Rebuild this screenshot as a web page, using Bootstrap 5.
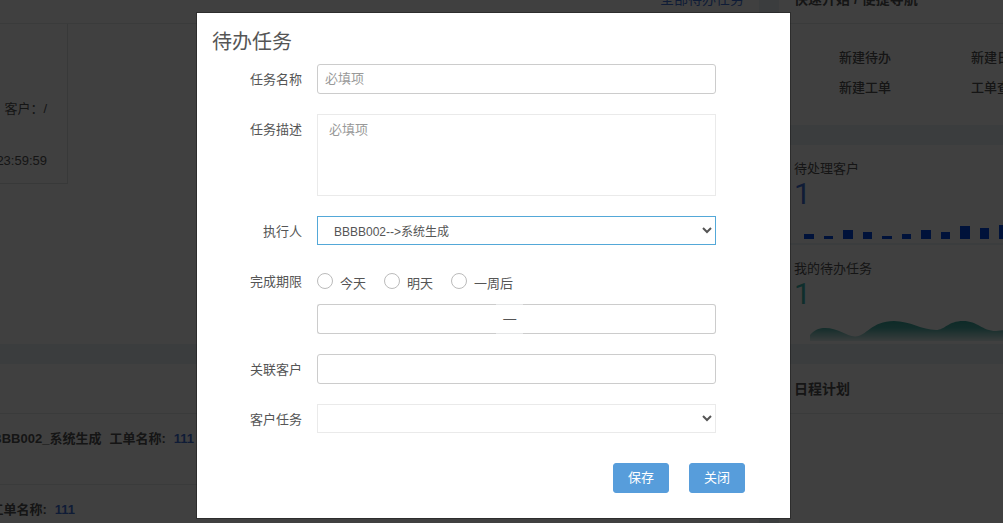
<!DOCTYPE html>
<html lang="zh-CN">
<head>
<meta charset="utf-8">
<meta name="viewport" content="width=device-width, initial-scale=1">
<title>待办任务</title>
<link href="https://cdn.jsdelivr.net/npm/bootstrap@5.3.0/dist/css/bootstrap.min.css" rel="stylesheet">
<style>
  body { font: 13px/20px "Liberation Sans", "Noto Sans CJK SC", sans-serif; color: #555; background: #ecf2f6; height: 100vh; overflow: hidden; }
  a { text-decoration: none; }

  /* dashboard behind the dialog */
  .dash { display: grid; grid-template-columns: minmax(0, 1fr) 224px; gap: 20px; height: 100vh; overflow: hidden; }
  .dash-col { display: flex; flex-direction: column; gap: 20px; }
  .panel { background: #fff; overflow: hidden; flex: none; }
  .panel.fill { flex: 1 0 auto; }
  .panel-head { height: 50px; padding: 0 15px; border-bottom: 1px solid #e7eaec; font-size: 14px; font-weight: 700; }
  .panel-head.cut { height: 24px; padding-bottom: 14px; }
  .blue { color: #3f72d8; }
  .todo-panel { height: 344px; }
  .todo-card { width: 68px; height: 160px; padding: 0 20px 12px 0; border: solid #dde1e4; border-width: 0 1px 1px 0; white-space: nowrap; overflow: hidden; }
  .order-row { height: 71px; padding-top: 15px; border-bottom: 1px solid #e7eaec; font-weight: 700; white-space: nowrap; overflow: hidden; }
  .order-row > div { display: flex; justify-content: flex-end; gap: 8px; }
  .order-a { width: 194px; }
  .order-b { width: 75px; }
  .quick { display: grid; grid-template-columns: 132px 80px; row-gap: 10px; padding: 24px 0 27px 60px; height: 101px; white-space: nowrap; }
  .quick a { color: #555; font-weight: 500; }
  .stat { height: 98px; padding: 14px 0 0 15px; }
  .stat-num { font: 30px/30px Roboto, sans-serif; }
  .teal { color: #3cb8b0; }
  .stat + .stat { border-top: 2px solid #ecf2f6; height: 101px; }
  .stat svg { display: block; margin-top: 5px; }

  /* dialog */
  .modal-backdrop { --bs-backdrop-opacity: .75; }
  .task-modal { padding-right: 16px; }
  .task-modal .modal-dialog { max-width: 595px; margin: 12px auto; }
  .task-modal .modal-content { border-radius: 0; border: 1px solid rgba(0,0,0,.3); color: #555; }
  .task-modal .modal-title { font-size: 20px; line-height: 30px; font-weight: 400; padding: 14px 15px 7px; }
  .task-form { display: grid; gap: 20px; padding-right: 74px; }
  .field-row { display: grid; grid-template-columns: 105px minmax(0, 1fr); column-gap: 15px; min-height: 30px; align-items: start; }
  .field-name { text-align: right; padding-top: 6px; }
  .task-modal .form-control { font-size: 13px; line-height: 20px; color: #555; border: 1px solid #ccc; border-radius: 3px; padding: 3px 7px 5px; height: 30px; box-shadow: none; }
  .task-modal .form-control::placeholder { color: #999; }
  .task-modal textarea.form-control { height: 82px; padding: 5px 11px; border-color: #eaeaea; border-radius: 0; resize: none; }
  .task-modal select.form-control { appearance: auto; height: 29px; padding: 4px 0 2px 12px; font-size: 12px; border-color: #eaeaea; border-radius: 0; background: #fff; }
  .task-modal select.is-active { border-color: #53a8d8; }
  .radios { display: flex; gap: 18px; height: 38px; padding-top: 6px; }
  .radios label { display: flex; gap: 7px; line-height: 24px; }
  .radios .form-check-input { width: 16px; height: 16px; margin: 1px 0 0; border-color: #bbb; }
  .range-dash { width: 27px; flex: none; border: solid #e5e6e7; border-width: 1px 0; text-align: center; line-height: 28px; }
  .task-modal .range-from { flex: 12 1 0; border-right: 0; border-radius: 3px 0 0 3px; }
  .task-modal .range-to { flex: 13 1 0; border-left: 0; border-radius: 0 3px 3px 0; }
  .actions { display: flex; justify-content: flex-end; gap: 20px; padding: 29px 45px 25px 0; }
  .btn-task { --bs-btn-color: #fff; --bs-btn-bg: #579ddb; --bs-btn-border-color: #579ddb; --bs-btn-hover-color: #fff; --bs-btn-hover-bg: #438bca; font-size: 13px; line-height: 20px; padding: 4px 14px; border-radius: 3px; }
</style>
</head>
<body>
<main class="dash">
  <div class="dash-col">
    <section class="panel todo-panel">
      <div class="panel-head cut d-flex justify-content-end align-items-end fw-normal"><a class="blue" href="#">全部待办任务</a></div>
      <div class="todo-card d-flex flex-column align-items-end justify-content-end">
        <span class="mb-4 pb-2">客户：/</span>
        <span>23:59:59</span>
      </div>
    </section>
    <section class="panel fill">
      <div class="panel-head"></div>
      <div class="order-row"><div class="order-a"><span>BBBB002_系统生成</span><span>工单名称:</span><a class="blue" href="#">111</a></div></div>
      <div class="order-row"><div class="order-b"><span>工单名称:</span><a class="blue" href="#">111</a></div></div>
    </section>
  </div>
  <div class="dash-col">
    <section class="panel">
      <div class="panel-head cut d-flex align-items-end">快速开始 / 便捷导航</div>
      <nav class="quick"><a href="#">新建待办</a><a href="#">新建日程</a><a href="#">新建工单</a><a href="#">工单查询</a></nav>
    </section>
    <section class="panel">
      <div class="stat">
        <div>待处理客户</div>
        <div class="stat-num blue">1</div>
        <svg width="209" height="26" viewBox="794 214 209 26" fill="#0048e8" aria-hidden="true">
          <path d="M804 234h10v5h-10zM824 236h9v3h-9zM843 230h10v9h-10zM863 232h9v7h-9zM882 236h10v3h-10zM902 234h9v5h-9zM921 230h10v9h-10zM941 232h9v7h-9zM960 226h10v13h-10zM980 228h9v11h-9zM999 225h10v14h-10z"/>
        </svg>
      </div>
      <div class="stat">
        <div>我的待办任务</div>
        <div class="stat-num teal">1</div>
        <svg width="209" height="28" viewBox="794 314 209 28" aria-hidden="true">
          <defs><linearGradient id="wave" x1="0" y1="0" x2="0" y2="1"><stop offset="0" stop-color="#36a89e"/><stop offset=".35" stop-color="#50b4ac"/><stop offset="1" stop-color="#e4f1f1"/></linearGradient></defs>
          <path fill="url(#wave)" d="M810 341V335C815 329 820 328 825 328C838 328 846 336 855 336.500C866 337 871 321 894 321C910 321 922 330 936 330C945 330 948 321 963 321C978 321 982 331 996 331L1004 330V341Z"/>
        </svg>
      </div>
    </section>
    <section class="panel fill">
      <div class="panel-head d-flex align-items-center">日程计划</div>
    </section>
  </div>
</main>

<div class="modal-backdrop show"></div>
<div class="modal task-modal d-block" tabindex="-1" role="dialog" aria-labelledby="taskTitle">
  <div class="modal-dialog">
    <div class="modal-content">
      <h1 class="modal-title" id="taskTitle">待办任务</h1>
      <form>
        <div class="task-form">
          <div class="field-row"><label class="field-name" for="taskName">任务名称</label><input class="form-control" id="taskName" type="text" placeholder="必填项"></div>
          <div class="field-row"><label class="field-name" for="taskDesc">任务描述</label><textarea class="form-control" id="taskDesc" placeholder="必填项"></textarea></div>
          <div class="field-row"><label class="field-name" for="owner">执行人</label><select class="form-control is-active" id="owner"><option>BBBB002--&gt;系统生成</option></select></div>
          <div class="field-row"><span class="field-name" id="dueName">完成期限</span>
            <div role="group" aria-labelledby="dueName">
              <div class="radios">
                <label><input class="form-check-input" type="radio" name="due">今天</label>
                <label><input class="form-check-input" type="radio" name="due">明天</label>
                <label><input class="form-check-input" type="radio" name="due">一周后</label>
              </div>
              <div class="d-flex">
                <input class="form-control range-from" type="text" aria-label="开始日期">
                <span class="range-dash">—</span>
                <input class="form-control range-to" type="text" aria-label="结束日期">
              </div>
            </div>
          </div>
          <div class="field-row"><label class="field-name" for="customer">关联客户</label><input class="form-control" id="customer" type="text"></div>
          <div class="field-row"><label class="field-name" for="customerTask">客户任务</label><select class="form-control" id="customerTask"><option></option></select></div>
        </div>
        <div class="actions">
          <button class="btn btn-task" type="button">保存</button>
          <button class="btn btn-task" type="button">关闭</button>
        </div>
      </form>
    </div>
  </div>
</div>
<script src="https://cdn.jsdelivr.net/npm/bootstrap@5.3.0/dist/js/bootstrap.bundle.min.js"></script>
</body>
</html>
